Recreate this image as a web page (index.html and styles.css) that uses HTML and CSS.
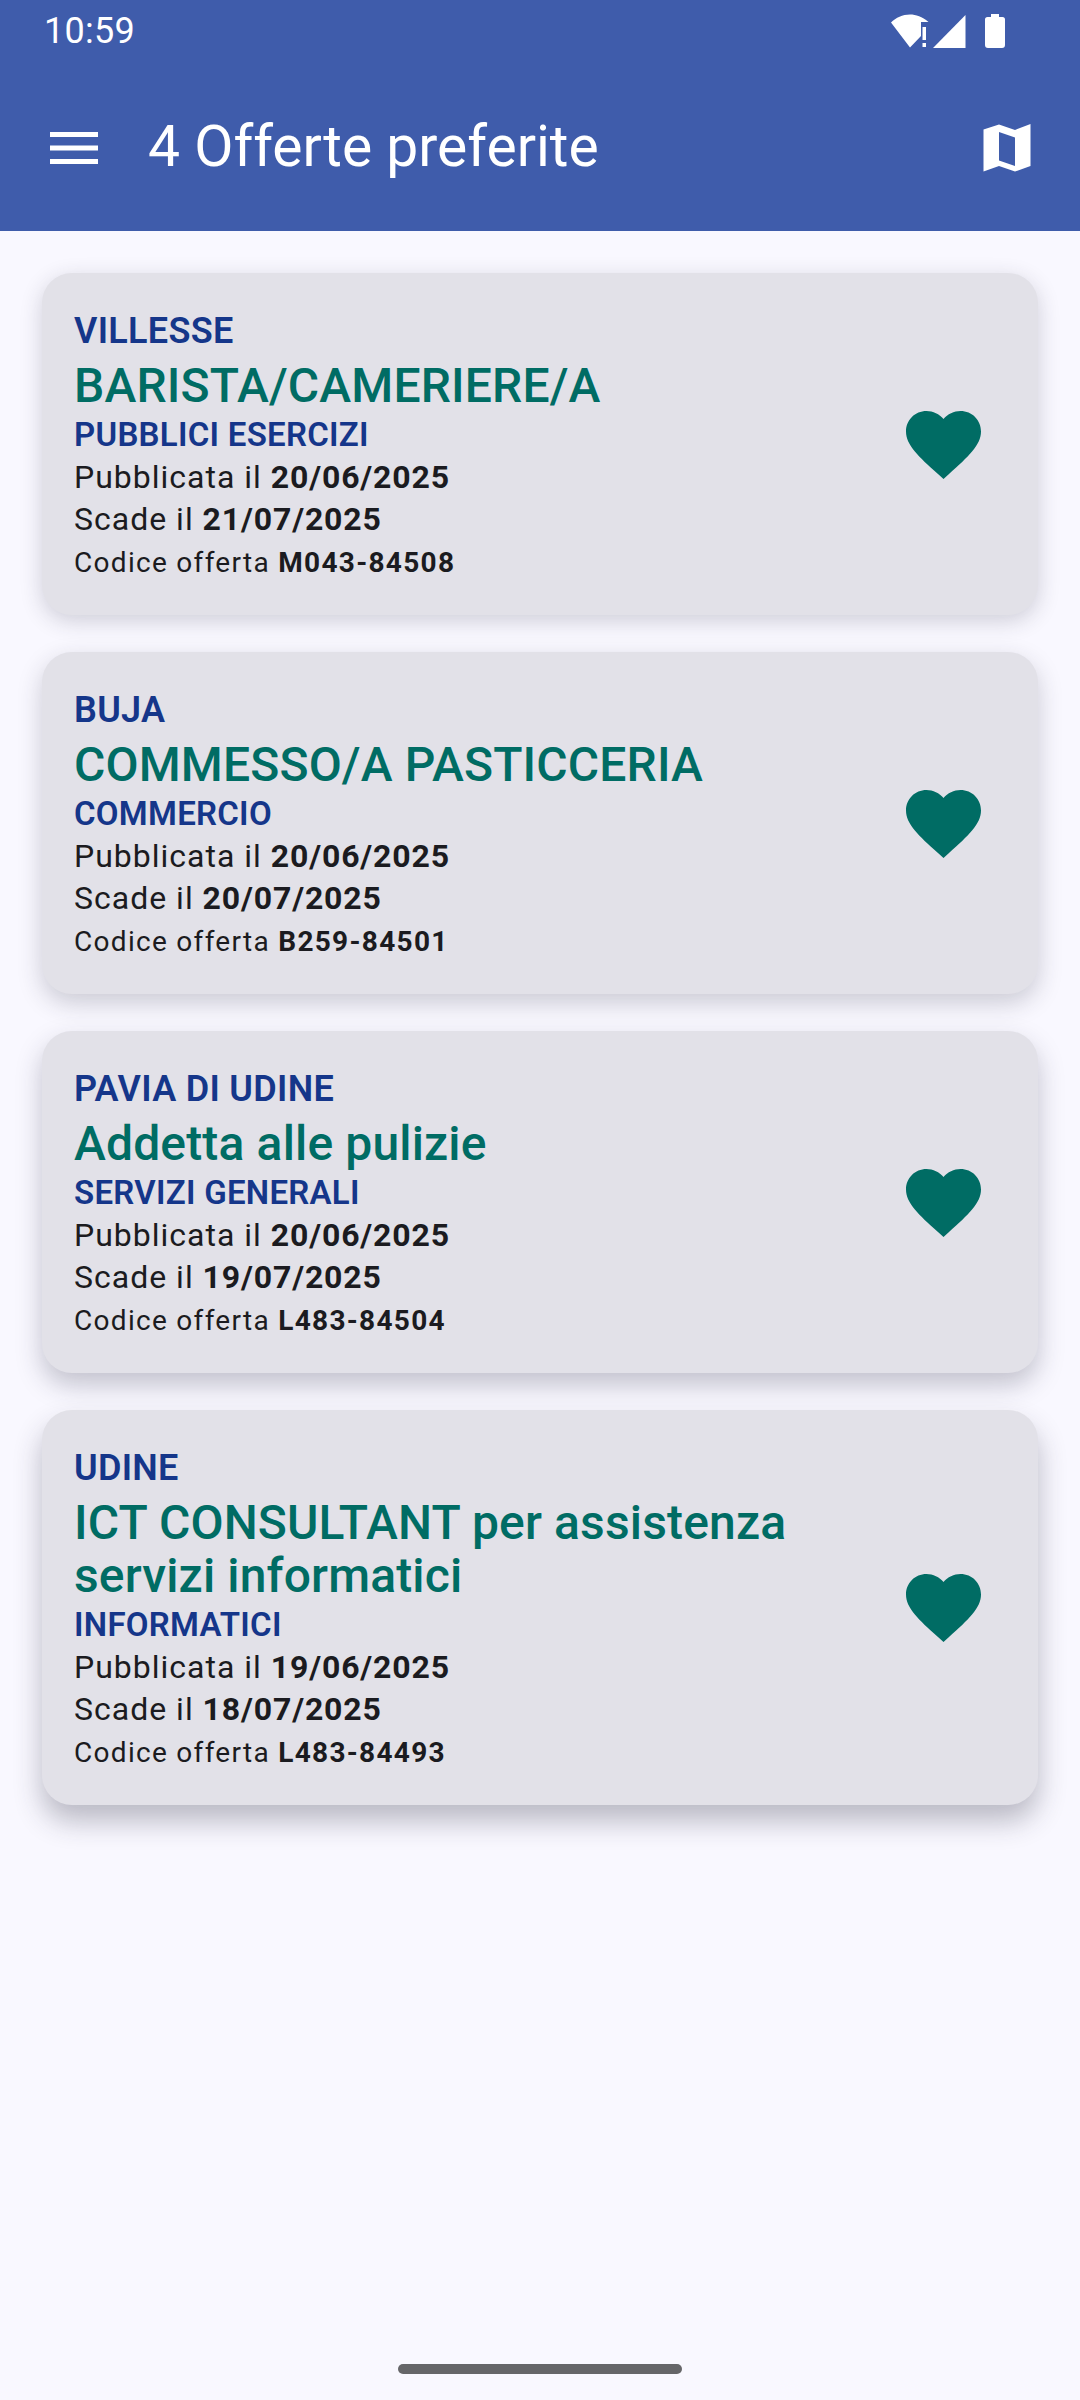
FILE: index.html
```html
<!DOCTYPE html>
<html lang="it">
<head>
<meta charset="utf-8">
<title>4 Offerte preferite</title>
<link rel="stylesheet" href="styles.css">
</head>
<body>
<header class="appbar">
  <div class="status">
    <span class="time">10:59</span>
    <div class="status-icons">
      <svg class="ic-wifi" width="38" height="34" viewBox="0 0 38 34"><path d="M0 8.5C5 3.500 11.500 0.500 19 0.500C25 0.500 31 2.500 37.500 8L30 8V22L19 33.500Z" fill="#fff"/><rect x="31.500" y="13" width="3.500" height="13" fill="#fff"/><rect x="31.500" y="29" width="3.500" height="4" fill="#fff"/></svg>
      <svg class="ic-signal" width="33" height="33" viewBox="0 0 33 33"><path d="M0 33L32.500 0V33Z" fill="#fff"/></svg>
      <svg class="ic-batt" width="20" height="34" viewBox="0 0 20 34"><path d="M6 0H14V3H17.500Q20 3 20 5.500V31Q20 34 17 34H3Q0 34 0 31V5.500Q0 3 2.500 3H6Z" fill="#fff"/></svg>
    </div>
  </div>
  <div class="toolbar">
    <svg class="ic-menu" width="48" height="32" viewBox="0 0 48 32"><path d="M0 0H48V5H0ZM0 13.500H48V18.500H0ZM0 27H48V32H0Z" fill="#fff"/></svg>
    <h1 class="title">4 Offerte preferite</h1>
    <svg class="ic-map" width="48" height="48" viewBox="0 0 48 48" fill-rule="evenodd"><path d="M16 0.500L32 6L47.500 0V42L32 47.500L16 42L0.500 47.500V5.500ZM16 8V36.500L32 42V13.500Z" fill="#fff"/></svg>
  </div>
</header>
<main class="list">
  <article class="card">
    <div class="info">
      <div class="place">VILLESSE</div>
      <div class="job">BARISTA/CAMERIERE/A</div>
      <div class="sector">PUBBLICI ESERCIZI</div>
      <div class="date">Pubblicata il <b>20/06/2025</b></div>
      <div class="date">Scade il <b>21/07/2025</b></div>
      <div class="code">Codice offerta <b>M043-84508</b></div>
    </div>
    <svg class="heart" width="75" height="68" viewBox="0 0 75 68"><path d="M37.500 68L32 63C12.500 45.500 0 34 0 20.500C0 9 9 0 20.500 0C27 0 33.500 3 37.500 8C41.500 3 48 0 54.500 0C66 0 75 9 75 20.500C75 34 62.500 45.500 43 63Z"/></svg>
  </article>
  <article class="card">
    <div class="info">
      <div class="place">BUJA</div>
      <div class="job">COMMESSO/A PASTICCERIA</div>
      <div class="sector">COMMERCIO</div>
      <div class="date">Pubblicata il <b>20/06/2025</b></div>
      <div class="date">Scade il <b>20/07/2025</b></div>
      <div class="code">Codice offerta <b>B259-84501</b></div>
    </div>
    <svg class="heart" width="75" height="68" viewBox="0 0 75 68"><path d="M37.500 68L32 63C12.500 45.500 0 34 0 20.500C0 9 9 0 20.500 0C27 0 33.500 3 37.500 8C41.500 3 48 0 54.500 0C66 0 75 9 75 20.500C75 34 62.500 45.500 43 63Z"/></svg>
  </article>
  <article class="card">
    <div class="info">
      <div class="place">PAVIA DI UDINE</div>
      <div class="job">Addetta alle pulizie</div>
      <div class="sector">SERVIZI GENERALI</div>
      <div class="date">Pubblicata il <b>20/06/2025</b></div>
      <div class="date">Scade il <b>19/07/2025</b></div>
      <div class="code">Codice offerta <b>L483-84504</b></div>
    </div>
    <svg class="heart" width="75" height="68" viewBox="0 0 75 68"><path d="M37.500 68L32 63C12.500 45.500 0 34 0 20.500C0 9 9 0 20.500 0C27 0 33.500 3 37.500 8C41.500 3 48 0 54.500 0C66 0 75 9 75 20.500C75 34 62.500 45.500 43 63Z"/></svg>
  </article>
  <article class="card">
    <div class="info">
      <div class="place">UDINE</div>
      <div class="job">ICT CONSULTANT per assistenza<br>servizi informatici</div>
      <div class="sector">INFORMATICI</div>
      <div class="date">Pubblicata il <b>19/06/2025</b></div>
      <div class="date">Scade il <b>18/07/2025</b></div>
      <div class="code">Codice offerta <b>L483-84493</b></div>
    </div>
    <svg class="heart" width="75" height="68" viewBox="0 0 75 68"><path d="M37.500 68L32 63C12.500 45.500 0 34 0 20.500C0 9 9 0 20.500 0C27 0 33.500 3 37.500 8C41.500 3 48 0 54.500 0C66 0 75 9 75 20.500C75 34 62.500 45.500 43 63Z"/></svg>
  </article>
</main>
<div class="home-bar"></div>
</body>
</html>
```
FILE: styles.css
```css
* { box-sizing: border-box; }
html, body { margin: 0; padding: 0; }
body {
  width: 1080px;
  height: 2400px;
  background: #f9f8ff;
  font-family: Roboto, "Noto Sans", sans-serif;
  display: flex;
  flex-direction: column;
  overflow: hidden;
}
.appbar {
  background: #3f5cab;
  height: 231px;
  color: #fff;
  flex: none;
}
.status {
  height: 62px;
  padding: 0 75px 0 44px;
  display: flex;
  align-items: center;
  justify-content: space-between;
}
.time { font-size: 36px; letter-spacing: 0.3px; }
.status-icons { display: flex; align-items: center; }
.ic-wifi { margin-right: 4px; }
.ic-signal { margin-right: 19px; }
.toolbar {
  height: 169px;
  padding: 0 49px 0 50px;
  display: flex;
  align-items: center;
}
.ic-menu, .ic-map { margin-top: 2px; }
.title {
  flex: 1;
  margin: 0 0 0 50px;
  font-size: 57px;
  font-weight: 400;
  line-height: 66px;
}
.list {
  flex: 1;
  padding: 42px 42px 0;
  display: flex;
  flex-direction: column;
  gap: 37px;
}
.card {
  background: #e2e1e8;
  border-radius: 30px;
  padding: 31px 57px 29px 32px;
  display: flex;
  align-items: center;
  justify-content: space-between;
  box-shadow: 0 6px 22px rgba(40, 40, 60, 0.2);
}
.card:nth-child(2) { box-shadow: 0 9px 24px rgba(40, 40, 60, 0.22); }
.card:nth-child(3) { box-shadow: 0 12px 26px rgba(40, 40, 60, 0.26); }
.card:nth-child(4) { box-shadow: 0 16px 28px rgba(40, 40, 60, 0.3); }
.place {
  font-size: 36px;
  font-weight: 600;
  line-height: 55px;
  letter-spacing: 0.3px;
  color: #15368a;
}
.job {
  font-size: 48px;
  font-weight: 500;
  line-height: 53px;
  letter-spacing: 0.15px;
  color: #006c64;
}
.sector {
  margin-top: 2px;
  font-size: 33px;
  font-weight: 600;
  line-height: 42px;
  letter-spacing: 0.27px;
  color: #15368a;
}
.date {
  font-size: 32px;
  line-height: 42px;
  letter-spacing: 1px;
  color: #1b1b20;
}
.date b { letter-spacing: 0.85px; }
.code {
  font-size: 28px;
  line-height: 46px;
  letter-spacing: 1.300px;
  color: #1b1b20;
}
b { font-weight: 700; }
.heart { fill: #006c64; flex: none; margin-top: -1px; }
.home-bar {
  position: absolute;
  left: 398px;
  top: 2364px;
  width: 284px;
  height: 10px;
  border-radius: 5px;
  background: #666669;
}
```
